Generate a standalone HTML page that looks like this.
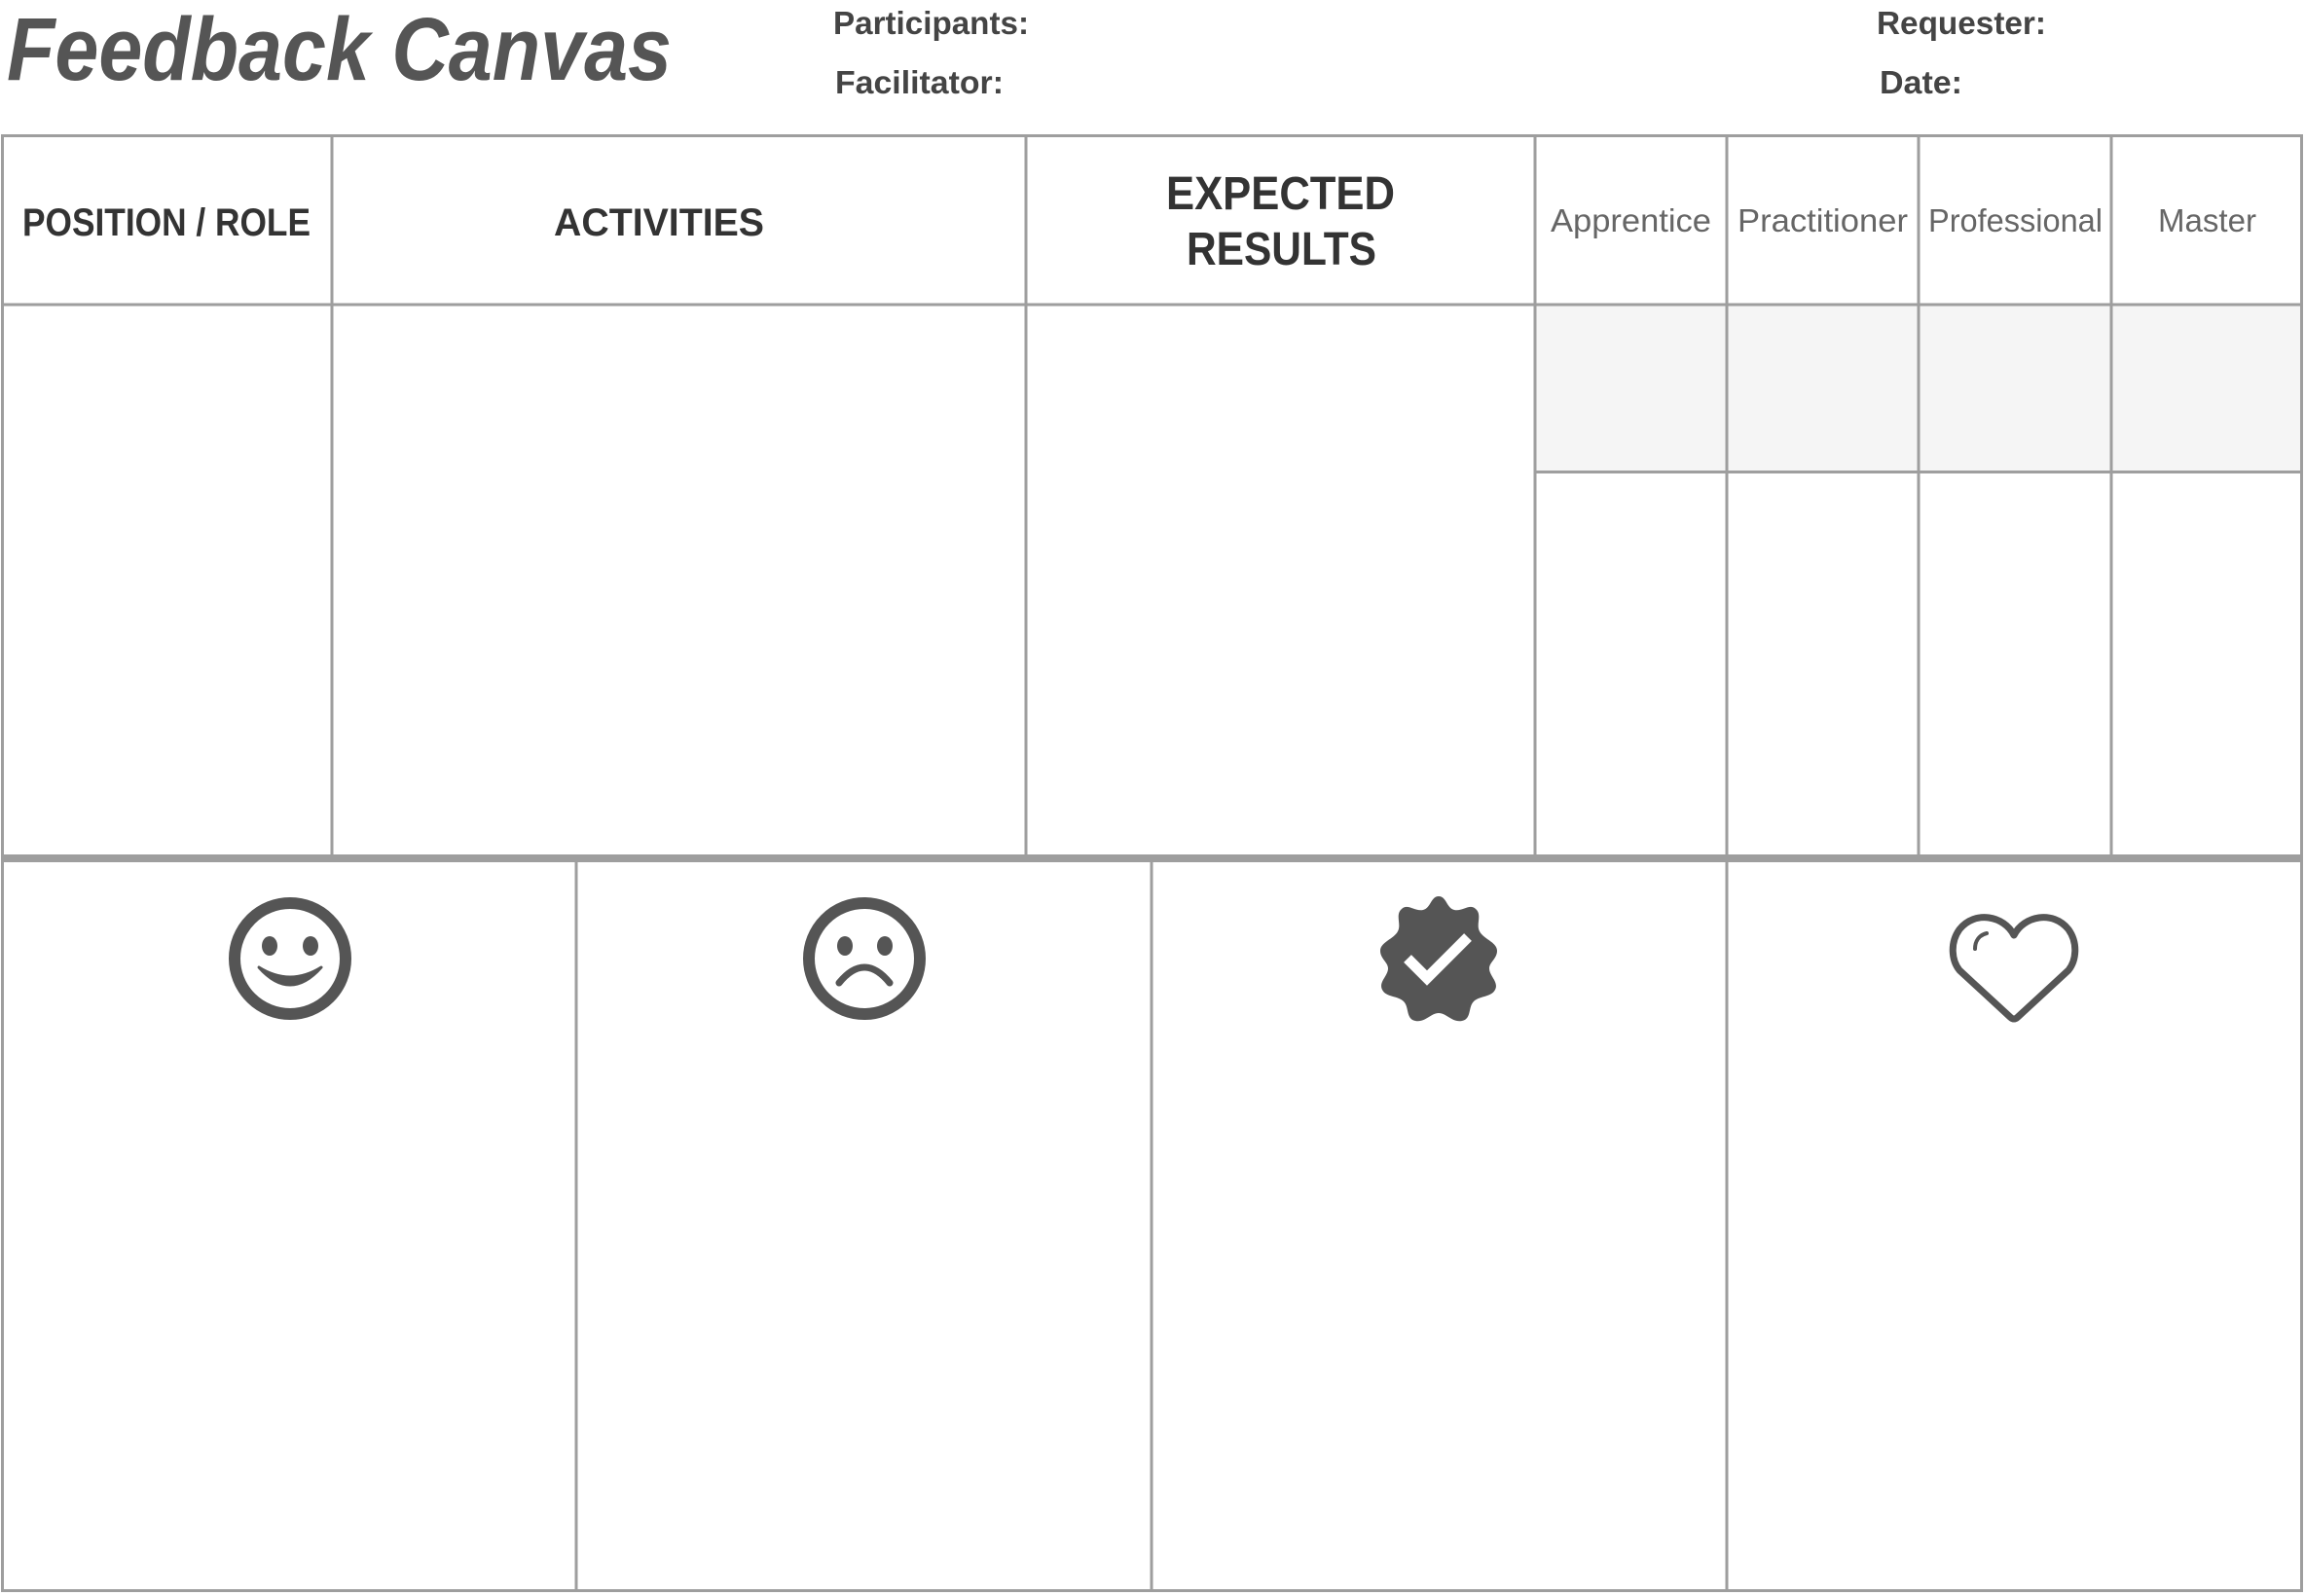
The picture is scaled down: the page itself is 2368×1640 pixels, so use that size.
<!DOCTYPE html>
<html><head><meta charset="utf-8"><style>
html,body{margin:0;padding:0;background:#fff;width:2368px;height:1640px;overflow:hidden}
svg{display:block}
</style></head><body>
<svg width="2368" height="1640" viewBox="0 0 2368 1640" xmlns="http://www.w3.org/2000/svg" font-family="Liberation Sans, sans-serif">
<rect width="2368" height="1640" fill="#fff"/>
<text x="7" y="82" font-size="92" font-weight="bold" font-style="italic" fill="#555" textLength="683" lengthAdjust="spacingAndGlyphs">Feedback Canvas</text>
<g font-size="33" font-weight="bold" fill="#444">
<text x="856" y="35" textLength="201" lengthAdjust="spacingAndGlyphs">Participants:</text>
<text x="858" y="96" textLength="173" lengthAdjust="spacingAndGlyphs">Facilitator:</text>
<text x="1928" y="35" textLength="174" lengthAdjust="spacingAndGlyphs">Requester:</text>
<text x="1931" y="96" textLength="85" lengthAdjust="spacingAndGlyphs">Date:</text>
</g>
<rect x="1577" y="313" width="788" height="172" fill="#f5f5f5"/>
<g stroke="#9e9e9e" stroke-width="3" fill="none">
<rect x="2.5" y="139.5" width="2362" height="1495"/>
<line x1="2" y1="313" x2="2365" y2="313"/>
<line x1="1577" y1="485" x2="2365" y2="485"/>
<line x1="341" y1="139" x2="341" y2="880"/>
<line x1="1054" y1="139" x2="1054" y2="880"/>
<line x1="1577" y1="139" x2="1577" y2="880"/>
<line x1="1774" y1="139" x2="1774" y2="880"/>
<line x1="1971" y1="139" x2="1971" y2="880"/>
<line x1="2169" y1="139" x2="2169" y2="880"/>
<line x1="592" y1="880" x2="592" y2="1636"/>
<line x1="1183" y1="880" x2="1183" y2="1636"/>
<line x1="1774" y1="880" x2="1774" y2="1636"/>
<line x1="2" y1="882" x2="2365" y2="882" stroke-width="8"/>
</g>
<g font-weight="bold" fill="#333">
<text x="23" y="242" font-size="40" textLength="296" lengthAdjust="spacingAndGlyphs">POSITION / ROLE</text>
<text x="569" y="242" font-size="40" textLength="216" lengthAdjust="spacingAndGlyphs">ACTIVITIES</text>
<text x="1198" y="215" font-size="48" textLength="235" lengthAdjust="spacingAndGlyphs">EXPECTED</text>
<text x="1219" y="272" font-size="48" textLength="195" lengthAdjust="spacingAndGlyphs">RESULTS</text>
</g>
<g font-size="33" fill="#666">
<text x="1593" y="238" textLength="165" lengthAdjust="spacingAndGlyphs">Apprentice</text>
<text x="1785" y="238" textLength="175" lengthAdjust="spacingAndGlyphs">Practitioner</text>
<text x="1981" y="238" textLength="179" lengthAdjust="spacingAndGlyphs">Professional</text>
<text x="2217" y="238" textLength="101" lengthAdjust="spacingAndGlyphs">Master</text>
</g>
<!-- smiley -->
<g fill="#555" stroke="#555">
<circle cx="298" cy="985" r="57" fill="none" stroke-width="12"/>
<ellipse cx="277" cy="972" rx="8" ry="10" stroke="none"/>
<ellipse cx="319" cy="972" rx="8" ry="10" stroke="none"/>
<path d="M266 994 Q298 1030 330 994 Q298 1014 266 994Z" stroke-width="3" stroke-linejoin="round"/>
</g>
<!-- sad -->
<g fill="#555" stroke="#555">
<circle cx="888" cy="985" r="57" fill="none" stroke-width="12"/>
<ellipse cx="868" cy="972" rx="8" ry="10" stroke="none"/>
<ellipse cx="909" cy="972" rx="8" ry="10" stroke="none"/>
<path d="M862 1010 Q888 978 914 1010" fill="none" stroke-width="7" stroke-linecap="round"/>
</g>
<!-- badge -->
<g transform="translate(1478 985)">
<path fill="#555" d="M0 -64 C8 -64 8 -52 16 -50 C24 -48 32 -57 38 -51 C45 -45 38 -35 42 -28 C46 -20 60 -17 60 -8 C60 0 52 4 52 10 C52 18 62 24 58 32 C54 40 42 38 36 44 C30 50 34 62 24 64 C14 66 8 56 0 56 C-8 56 -14 66 -24 64 C-34 62 -30 50 -36 44 C-42 38 -54 40 -58 32 C-62 24 -52 18 -52 10 C-52 4 -60 0 -60 -8 C-60 -17 -46 -20 -42 -28 C-38 -35 -45 -45 -38 -51 C-32 -57 -24 -48 -16 -50 C-8 -52 -8 -64 0 -64Z"/>
<path d="M-32 0 L-12 20 L30 -22" fill="none" stroke="#fff" stroke-width="11"/>
</g>
<!-- heart -->
<g transform="translate(2069 985)" fill="none" stroke="#555" stroke-width="7" stroke-linejoin="round" stroke-linecap="round">
<path d="M0 -24 C10 -44 40 -50 56 -30 C66 -16 64 2 56 12 L4 60 Q0 64 -4 60 L-56 12 C-64 2 -66 -16 -56 -30 C-40 -50 -10 -44 0 -24Z"/>
<path d="M-28 -26 C-36 -24 -40 -18 -40 -10" stroke-width="4"/>
</g>
</svg>
</body></html>
